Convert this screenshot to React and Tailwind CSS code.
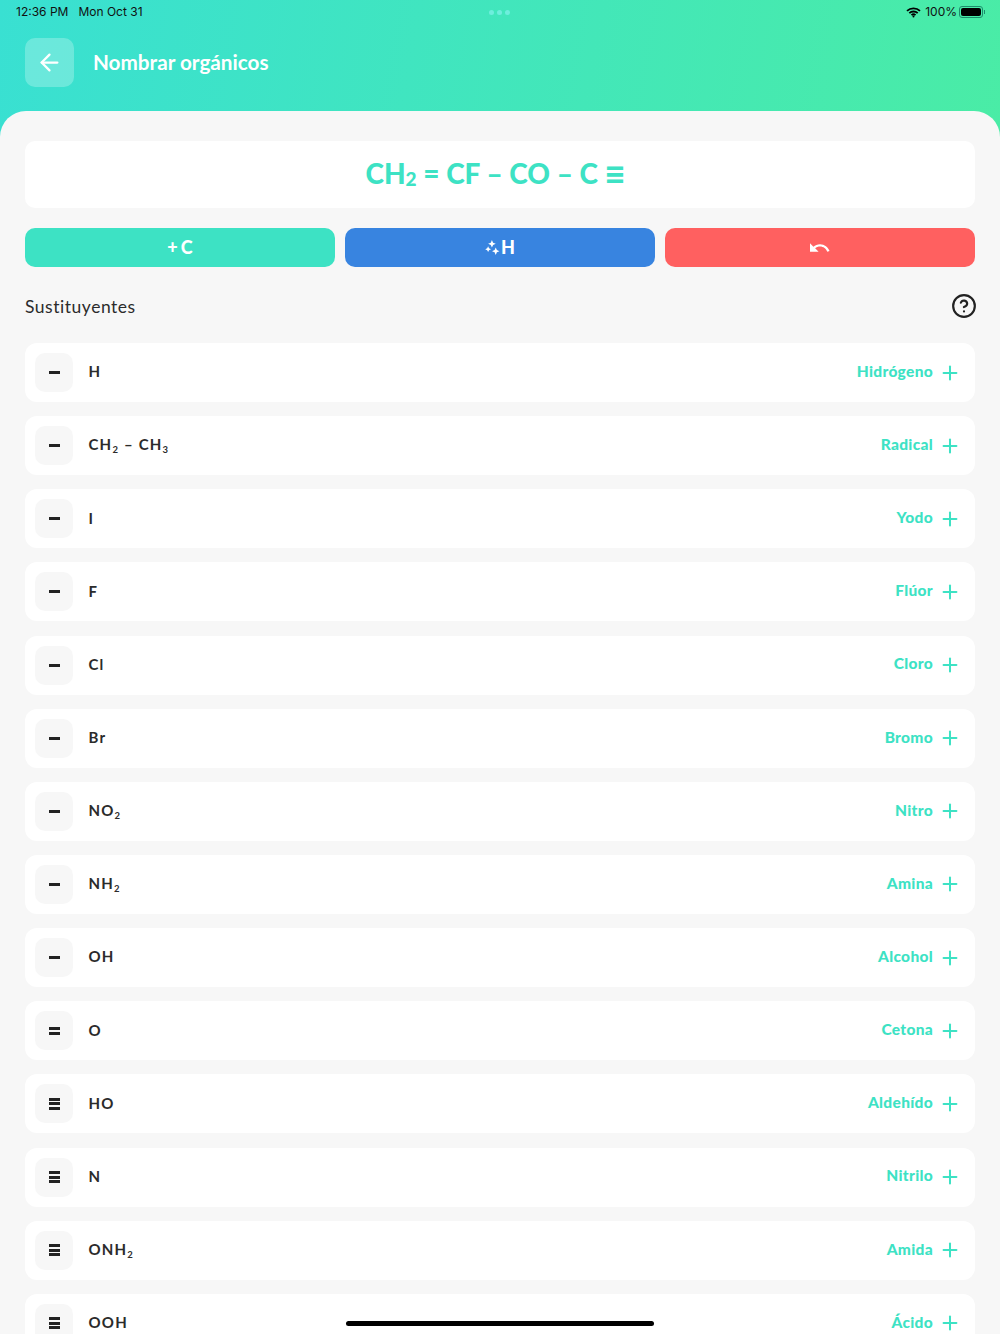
import { ArrowLeft, CircleHelp, Plus } from 'lucide-react'

const FONT = 'font-["Lato","Noto_Sans",sans-serif]'

const Sub = ({ children }) => <span className="text-[9.5px] relative top-[3px]">{children}</span>

const rows = [
  { bars: 1, label: ['H'], name: 'Hidrógeno' },
  { bars: 1, label: ['CH', 2, ' – CH', 3], name: 'Radical' },
  { bars: 1, label: ['I'], name: 'Yodo' },
  { bars: 1, label: ['F'], name: 'Flúor' },
  { bars: 1, label: ['Cl'], name: 'Cloro' },
  { bars: 1, label: ['Br'], name: 'Bromo' },
  { bars: 1, label: ['NO', 2], name: 'Nitro' },
  { bars: 1, label: ['NH', 2], name: 'Amina' },
  { bars: 1, label: ['OH'], name: 'Alcohol' },
  { bars: 2, label: ['O'], name: 'Cetona' },
  { bars: 3, label: ['HO'], name: 'Aldehído' },
  { bars: 3, label: ['N'], name: 'Nitrilo' },
  { bars: 3, label: ['ONH', 2], name: 'Amida' },
  { bars: 3, label: ['OOH'], name: 'Ácido' },
]

function Bars({ count }) {
  return (
    <div className="flex flex-col gap-[1.5px]">
      {Array.from({ length: count }).map((_, i) => (
        <span key={i} className="block w-[11px] h-[3px] bg-[#222222]" />
      ))}
    </div>
  )
}

function Row({ bars, label, name }) {
  return (
    <div className="shrink-0 h-[59px] bg-white rounded-[12px] flex items-center pl-[10px] pr-[14px]">
      <div className="w-[38px] h-[39px] rounded-[10px] bg-[#f7f7f7] flex items-center justify-center">
        <Bars count={bars} />
      </div>
      <div className="ml-[15.5px] mb-[2px] text-[15px] font-bold tracking-[0.08em] text-[#2b2b2b] whitespace-pre">
        {label.map((part, i) => (typeof part === 'number' ? <Sub key={i}>{part}</Sub> : <span key={i}>{part}</span>))}
      </div>
      <div className="ml-auto flex items-center gap-[6px] text-[#3de2c4]">
        <span className="mb-[2px] text-[15.5px] font-black tracking-[0.02em]">{name}</span>
        <Plus size={22} strokeWidth={2.2} />
      </div>
    </div>
  )
}

export default function App() {
  return (
    <div className={`w-[1000px] h-[1334px] overflow-hidden relative bg-[#f7f7f7] ${FONT}`}>
      <div className="h-[137px] bg-[linear-gradient(100deg,#39e0d2_0%,#4aeca6_100%)]">
        <div className="h-[24px] flex items-center pl-[16px] pr-[15px] text-[12px] text-[#111111] font-['Inter',sans-serif]">
          <span>12:36 PM</span>
          <span className="ml-[10px]">Mon Oct 31</span>
          <div className="ml-[346px] flex gap-[3px]">
            <span className="w-[5px] h-[5px] rounded-full bg-[#6eeedd]" />
            <span className="w-[5px] h-[5px] rounded-full bg-[#6eeedd]" />
            <span className="w-[5px] h-[5px] rounded-full bg-[#6eeedd]" />
          </div>
          <div className="ml-auto flex items-center gap-[4px]">
            <svg width="15" height="11" viewBox="0 0 15 11" fill="none" stroke="#000" strokeWidth="1.8">
              <path d="M1 3.9a9.4 9.4 0 0 1 13 0" />
              <path d="M3.3 6.2a6.1 6.1 0 0 1 8.4 0" />
              <path d="M5.5 8.2a3 3 0 0 1 4 0" />
              <circle cx="7.5" cy="9.6" r="1" fill="#000" stroke="none" />
            </svg>
            <span className="-mr-[2px]">100%</span>
            <div className="flex items-center">
              <div className="w-[24px] h-[12px] rounded-[3px] border border-[#1d8c6c] p-px">
                <div className="w-full h-full rounded-[2px] bg-black" />
              </div>
              <div className="w-px h-[4px] bg-[#1d8c6c] ml-px" />
            </div>
          </div>
        </div>

        <div className="pl-[25px] pt-[14px] flex items-start">
          <div className="w-[49px] h-[49px] rounded-[10px] bg-white/25 flex items-center justify-center text-white">
            <ArrowLeft size={27} strokeWidth={2} />
          </div>
          <div className="ml-[19px] h-[49px] flex items-center text-white text-[20.7px] font-bold">Nombrar orgánicos</div>
        </div>
      </div>

      <div className="-mt-[26px] h-[1223px] bg-[#f7f7f7] rounded-t-[26px] pt-[30px] px-[25px] flex flex-col overflow-hidden">
        <div className="shrink-0 h-[67px] bg-white rounded-[10px] flex items-center justify-center text-[#3de2c4] text-[28px] font-black pr-[9px] pb-[3px]">
          <span>CH</span>
          <span className="text-[19px] relative top-[6px]">2</span>
          <span className="whitespace-pre"> = CF – CO – C </span>
          <span className="text-[36px] leading-none">≡</span>
        </div>

        <div className="shrink-0 mt-[20px] grid grid-cols-3 gap-[10px]">
          <div className="h-[39px] rounded-[10px] bg-[#3de2c4] flex items-center justify-center text-white text-[18px] font-black">
            <span className="mr-[3px]">+</span>C
          </div>
          <div className="h-[39px] rounded-[10px] bg-[#3884e0] flex items-center justify-center text-white text-[18px] font-black">
            <svg width="15" height="15" viewBox="0 0 13 13" fill="white" className="mr-[1px]">
              <path d="M6 0 7 2.300 9.300 3.300 7 4.300 6 6.600 5 4.300 2.700 3.300 5 2.300Z" />
              <path d="M2.700 5.500 3.500 7.200 5.200 8 3.500 8.800 2.700 10.500 1.900 8.800 .2 8 1.900 7.200Z" />
              <path d="M9.300 6.500 10.300 8.700 12.500 9.700 10.300 10.700 9.300 12.900 8.300 10.700 6.100 9.700 8.300 8.700Z" />
            </svg>
            H
          </div>
          <div className="h-[39px] rounded-[10px] bg-[#ff6060] flex items-center justify-center">
            <svg width="21" height="20" viewBox="2 4 22 16" fill="white">
              <path d="M12.5 8c-2.65 0-5.05.99-6.900 2.600L2 7v9h9l-3.620-3.620c1.390-1.160 3.160-1.880 5.120-1.880 3.540 0 6.550 2.310 7.600 5.500l2.370-.780C21.080 11.030 17.150 8 12.500 8z" />
            </svg>
          </div>
        </div>

        <div className="shrink-0 mt-[28px] h-[24px] flex items-center justify-between">
          <span className="text-[17.5px] text-[#2b2b2b] tracking-[0.03em]">Sustituyentes</span>
          <CircleHelp size={26} strokeWidth={2} className="text-[#222222] -mr-[2px] mb-[2px]" />
        </div>

        <div className="mt-[24px] flex flex-col gap-[14.15px]">
          {rows.map((row) => (
            <Row key={row.name} {...row} />
          ))}
        </div>
      </div>

      <div className="absolute left-[346px] bottom-[8px] w-[308px] h-[5px] rounded-full bg-black" />
    </div>
  )
}
